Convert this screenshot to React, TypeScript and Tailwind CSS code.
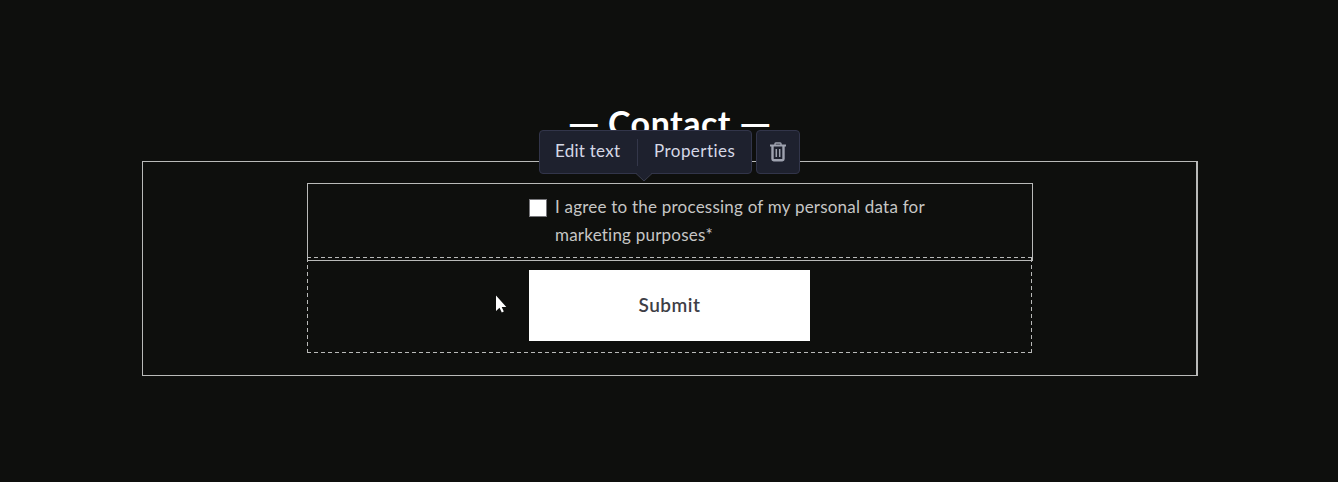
type ToolbarButtonProps = {
    label: string;
    className?: string;
};

function ToolbarButton({ label, className = "" }: ToolbarButtonProps) {
    return (
        <button type="button" className={`h-full pb-[3px] text-left text-[17px] leading-none text-[#d5d8e6] ${className}`}>
            {label}
        </button>
    );
}

function TrashIcon() {
    return (
        <svg width="16" height="20" viewBox="0 0 16 20" fill="none" stroke="#9ea2af">
            <path d="M5 3V1.8C5 1.2 5.4 1 5.8 1h4.4c.4 0 .8.2.8.8V3" strokeWidth="1.4" />
            <path d="M0 3.5h16" strokeWidth="2" />
            <path d="M2.5 4v13c0 .8.5 1.2 1.2 1.2h8.6c.7 0 1.2-.4 1.2-1.2V4" strokeWidth="2.4" />
            <path d="M6.3 7v8M9.7 7v8" strokeWidth="1.5" />
        </svg>
    );
}

function Toolbar() {
    return (
        <div className="absolute top-[130px] left-[539px] flex gap-1">
            <div className="relative flex h-11 w-[213px] items-center rounded border border-[#32354a] bg-[#1e212e]">
                <ToolbarButton label="Edit text" className="w-[97px] pl-[15px] tracking-[0.25px]" />
                <span className="h-[27px] w-px bg-[#34374a]" />
                <ToolbarButton label="Properties" className="pl-4 tracking-[0.45px]" />
                <svg className="absolute top-[42px] left-[96px]" width="16" height="9" viewBox="0 0 16 9">
                    <path d="M0 0L8 8L16 0" fill="#1e212e" />
                    <path d="M0 .5L8 8L16 .5" fill="none" stroke="#3c3f50" />
                </svg>
            </div>
            <button type="button" className="flex h-11 w-11 items-center justify-center rounded border border-[#32354a] bg-[#1e212e]">
                <TrashIcon />
            </button>
        </div>
    );
}

function Cursor() {
    return (
        <svg className="absolute top-[294px] left-[495px]" width="13" height="20" viewBox="0 0 13 20">
            <path d="M1 1.5V17l3.5-3.2L6.8 18.5l2-1L6.7 13h4.6z" fill="#fff" />
        </svg>
    );
}

// 4px dashes with 3px gaps, longer than the browser's own dashed border
const dashedX = "h-px bg-[repeating-linear-gradient(to_right,#b9bab9_0_4px,transparent_4px_7px)]";
const dashedY = "w-px bg-[repeating-linear-gradient(to_bottom,#b9bab9_0_4px,transparent_4px_7px)]";

export default function App() {
    return (
        <div className="relative h-[482px] w-[1338px] overflow-hidden bg-[#0e0f0d] pt-[102px] font-['Lato',sans-serif]">
            <h2 className="flex h-[59px] justify-center gap-2 pl-px text-[34px] leading-[42px] font-bold whitespace-nowrap text-white">
                <span className="inline-block origin-right scale-x-[1.2]">—</span>
                <span className="tracking-[0.5px]">Contact</span>
                <span className="inline-block origin-left scale-x-[1.2]">—</span>
            </h2>

            <form className="ml-[142px] h-[215px] w-[1056px] border border-r-2 border-[#b9bab9] pt-[21px] pl-[164px]">
                <div className="h-[78px] w-[726px] border border-[#b9bab9] pt-[10px] pl-[221px]">
                    <label className="flex gap-2">
                        <span className="mt-[5px] h-[18px] w-[18px] shrink-0 border border-[#77777b] bg-white" />
                        <span className="-mt-px text-[17px] leading-7 tracking-[0.22px] whitespace-nowrap text-[#c6c6c5]">
                            I agree to the processing of my personal data for
                            <br />
                            marketing purposes*
                        </span>
                    </label>
                </div>
                <div className="-mt-1 flex h-24 w-[725px] flex-col">
                    <div className={dashedX} />
                    <div className="flex flex-1 justify-between">
                        <div className={dashedY} />
                        <button type="button" className="mt-3 h-[71px] w-[281px] bg-white text-[19px] font-semibold tracking-[0.5px] text-[#3e3e46]">
                            Submit
                        </button>
                        <div className={dashedY} />
                    </div>
                    <div className={dashedX} />
                </div>
            </form>

            <Toolbar />
            <Cursor />
        </div>
    );
}
